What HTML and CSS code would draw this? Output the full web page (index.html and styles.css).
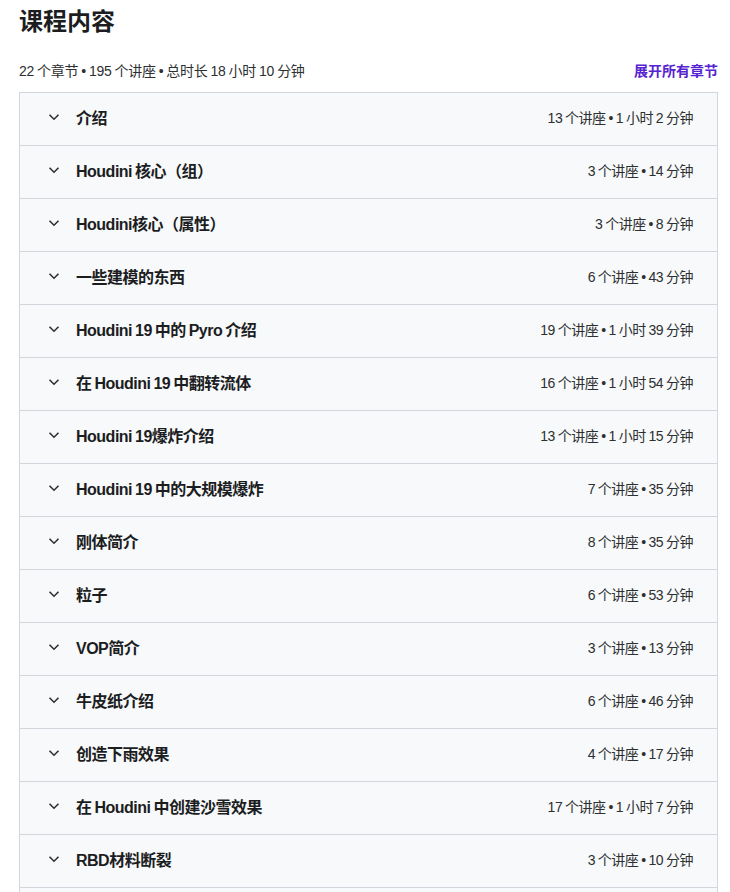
FILE: index.html
```html
<!DOCTYPE html>
<html lang="zh-CN">
<head>
    <meta charset="UTF-8">
    <meta name="viewport" content="width=device-width, initial-scale=1.0">
    <title>课程内容</title>
    <link rel="stylesheet" href="styles.css">
</head>
<body>
    <div class="page">
        <h2 class="title">课程内容</h2>
        <div class="summary">
            <span>22 个章节 • 195 个讲座 • 总时长 18 小时 10 分钟</span>
            <a href="#" class="expand">展开所有章节</a>
        </div>

        <div class="sections">
            <div class="section">
                <svg class="chev" viewBox="0 0 12 8"><path d="M1.5 1.8 6 6.2 10.5 1.8"/></svg>
                <span class="name">介绍</span>
                <span class="meta">13 个讲座 • 1 小时 2 分钟</span>
            </div>
            <div class="section">
                <svg class="chev" viewBox="0 0 12 8"><path d="M1.5 1.8 6 6.2 10.5 1.8"/></svg>
                <span class="name">Houdini 核心（组）</span>
                <span class="meta">3 个讲座 • 14 分钟</span>
            </div>
            <div class="section">
                <svg class="chev" viewBox="0 0 12 8"><path d="M1.5 1.8 6 6.2 10.5 1.8"/></svg>
                <span class="name">Houdini核心（属性）</span>
                <span class="meta">3 个讲座 • 8 分钟</span>
            </div>
            <div class="section">
                <svg class="chev" viewBox="0 0 12 8"><path d="M1.5 1.8 6 6.2 10.5 1.8"/></svg>
                <span class="name">一些建模的东西</span>
                <span class="meta">6 个讲座 • 43 分钟</span>
            </div>
            <div class="section">
                <svg class="chev" viewBox="0 0 12 8"><path d="M1.5 1.8 6 6.2 10.5 1.8"/></svg>
                <span class="name">Houdini 19 中的 Pyro 介绍</span>
                <span class="meta">19 个讲座 • 1 小时 39 分钟</span>
            </div>
            <div class="section">
                <svg class="chev" viewBox="0 0 12 8"><path d="M1.5 1.8 6 6.2 10.5 1.8"/></svg>
                <span class="name">在 Houdini 19 中翻转流体</span>
                <span class="meta">16 个讲座 • 1 小时 54 分钟</span>
            </div>
            <div class="section">
                <svg class="chev" viewBox="0 0 12 8"><path d="M1.5 1.8 6 6.2 10.5 1.8"/></svg>
                <span class="name">Houdini 19爆炸介绍</span>
                <span class="meta">13 个讲座 • 1 小时 15 分钟</span>
            </div>
            <div class="section">
                <svg class="chev" viewBox="0 0 12 8"><path d="M1.5 1.8 6 6.2 10.5 1.8"/></svg>
                <span class="name">Houdini 19 中的大规模爆炸</span>
                <span class="meta">7 个讲座 • 35 分钟</span>
            </div>
            <div class="section">
                <svg class="chev" viewBox="0 0 12 8"><path d="M1.5 1.8 6 6.2 10.5 1.8"/></svg>
                <span class="name">刚体简介</span>
                <span class="meta">8 个讲座 • 35 分钟</span>
            </div>
            <div class="section">
                <svg class="chev" viewBox="0 0 12 8"><path d="M1.5 1.8 6 6.2 10.5 1.8"/></svg>
                <span class="name">粒子</span>
                <span class="meta">6 个讲座 • 53 分钟</span>
            </div>
            <div class="section">
                <svg class="chev" viewBox="0 0 12 8"><path d="M1.5 1.8 6 6.2 10.5 1.8"/></svg>
                <span class="name">VOP简介</span>
                <span class="meta">3 个讲座 • 13 分钟</span>
            </div>
            <div class="section">
                <svg class="chev" viewBox="0 0 12 8"><path d="M1.5 1.8 6 6.2 10.5 1.8"/></svg>
                <span class="name">牛皮纸介绍</span>
                <span class="meta">6 个讲座 • 46 分钟</span>
            </div>
            <div class="section">
                <svg class="chev" viewBox="0 0 12 8"><path d="M1.5 1.8 6 6.2 10.5 1.8"/></svg>
                <span class="name">创造下雨效果</span>
                <span class="meta">4 个讲座 • 17 分钟</span>
            </div>
            <div class="section">
                <svg class="chev" viewBox="0 0 12 8"><path d="M1.5 1.8 6 6.2 10.5 1.8"/></svg>
                <span class="name">在 Houdini 中创建沙雪效果</span>
                <span class="meta">17 个讲座 • 1 小时 7 分钟</span>
            </div>
            <div class="section">
                <svg class="chev" viewBox="0 0 12 8"><path d="M1.5 1.8 6 6.2 10.5 1.8"/></svg>
                <span class="name">RBD材料断裂</span>
                <span class="meta">3 个讲座 • 10 分钟</span>
            </div>
            <div class="section"></div>
        </div>
    </div>
</body>
</html>
```

FILE: styles.css
```css
body {
    margin: 0;
    background: #fff;
    color: #2d2f31;
    font-family: "Liberation Sans", "Noto Sans CJK SC", sans-serif;
}
.page {
    width: 699px;
    padding: 0 12px 0 19px;
}
.title {
    margin: 0;
    padding-top: 7px;
    font-size: 24px;
    line-height: 30px;
    font-weight: bold;
    color: #1c1d1f;
}
.summary {
    display: flex;
    justify-content: space-between;
    align-items: center;
    margin-top: 22px;
    height: 22px;
    font-size: 14px;
}
.summary span {
    letter-spacing: -0.3px;
    word-spacing: -0.5px;
}
.expand {
    color: #5624d0;
    font-weight: bold;
    text-decoration: none;
}
.sections {
    margin-top: 11px;
    border: 1px solid #d1d7dc;
    border-top: none;
}
.section {
    box-sizing: border-box;
    display: flex;
    align-items: center;
    height: 53px;
    padding: 0 24px 4px 28px;
    background: #f7f9fa;
    border-top: 1px solid #d1d7dc;
}
.chev {
    width: 12px;
    height: 8px;
    margin-right: 16px;
    fill: none;
    stroke: #2d2f31;
    stroke-width: 1.6;
}
.name {
    flex: 1;
    font-size: 16px;
    font-weight: bold;
    color: #1c1d1f;
    letter-spacing: -0.5px;
    word-spacing: -1px;
}
.meta {
    font-size: 14px;
    letter-spacing: -0.5px;
    word-spacing: -0.5px;
}
```
